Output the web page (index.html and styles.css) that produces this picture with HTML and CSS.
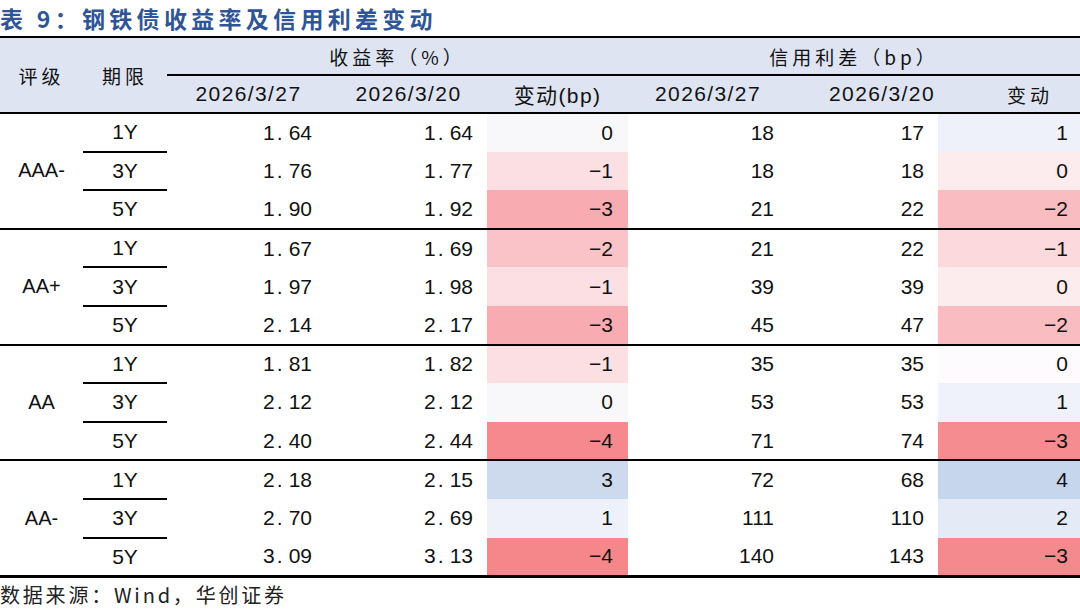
FILE: index.html
```html
<!DOCTYPE html>
<html lang="zh">
<head>
<meta charset="utf-8">
<title>钢铁债收益率及信用利差变动</title>
<link rel="stylesheet" href="styles.css">
</head>
<body>
<div class="title">表 9：钢铁债收益率及信用利差变动</div>
<table class="tbl">
  <colgroup>
    <col class="c1"><col class="c2"><col class="c3"><col class="c4"><col class="c5"><col class="c6"><col class="c7"><col class="c8">
  </colgroup>
  <thead>
    <tr class="h1">
      <th rowspan="2" class="cn hb">评级</th>
      <th rowspan="2" class="cn hb">期限</th>
      <th colspan="3" class="cn hl">收益率（%）</th>
      <th colspan="3" class="cn hl">信用利差（bp）</th>
    </tr>
    <tr class="h2">
      <th class="dt hb">2026/3/27</th>
      <th class="dt hb">2026/3/20</th>
      <th class="dt hb">变动(bp)</th>
      <th class="dt hb">2026/3/27</th>
      <th class="dt hb hs">2026/3/20</th>
      <th class="cn hb hv">变动</th>
    </tr>
  </thead>
  <tbody>
    <tr class="g">
      <td rowspan="3" class="lab">AAA-</td>
      <td class="term sub">1Y</td>
      <td class="num y1">1<span class="dp">.</span>64</td>
      <td class="num">1<span class="dp">.</span>64</td>
      <td class="num chg" style="background:#f8f8fb">0</td>
      <td class="num">18</td>
      <td class="num">17</td>
      <td class="num chg2" style="background:#eef1fa">1</td>
    </tr>
    <tr>
      <td class="term sub">3Y</td>
      <td class="num y1">1<span class="dp">.</span>76</td>
      <td class="num">1<span class="dp">.</span>77</td>
      <td class="num chg" style="background:#fbdfe3">−1</td>
      <td class="num">18</td>
      <td class="num">18</td>
      <td class="num chg2" style="background:#fdecee">0</td>
    </tr>
    <tr>
      <td class="term">5Y</td>
      <td class="num y1">1<span class="dp">.</span>90</td>
      <td class="num">1<span class="dp">.</span>92</td>
      <td class="num chg" style="background:#f8abb0">−3</td>
      <td class="num">21</td>
      <td class="num">22</td>
      <td class="num chg2" style="background:#f9bdc1">−2</td>
    </tr>

    <tr class="g">
      <td rowspan="3" class="lab">AA+</td>
      <td class="term sub">1Y</td>
      <td class="num y1">1<span class="dp">.</span>67</td>
      <td class="num">1<span class="dp">.</span>69</td>
      <td class="num chg" style="background:#f9c3c7">−2</td>
      <td class="num">21</td>
      <td class="num">22</td>
      <td class="num chg2" style="background:#fbd9dd">−1</td>
    </tr>
    <tr>
      <td class="term sub">3Y</td>
      <td class="num y1">1<span class="dp">.</span>97</td>
      <td class="num">1<span class="dp">.</span>98</td>
      <td class="num chg" style="background:#fbdfe3">−1</td>
      <td class="num">39</td>
      <td class="num">39</td>
      <td class="num chg2" style="background:#fdecee">0</td>
    </tr>
    <tr>
      <td class="term">5Y</td>
      <td class="num y1">2<span class="dp">.</span>14</td>
      <td class="num">2<span class="dp">.</span>17</td>
      <td class="num chg" style="background:#f8abb0">−3</td>
      <td class="num">45</td>
      <td class="num">47</td>
      <td class="num chg2" style="background:#f9bdc1">−2</td>
    </tr>

    <tr class="g">
      <td rowspan="3" class="lab">AA</td>
      <td class="term sub">1Y</td>
      <td class="num y1">1<span class="dp">.</span>81</td>
      <td class="num">1<span class="dp">.</span>82</td>
      <td class="num chg" style="background:#fbdfe3">−1</td>
      <td class="num">35</td>
      <td class="num">35</td>
      <td class="num chg2" style="background:#fdfbfd">0</td>
    </tr>
    <tr>
      <td class="term sub">3Y</td>
      <td class="num y1">2<span class="dp">.</span>12</td>
      <td class="num">2<span class="dp">.</span>12</td>
      <td class="num chg" style="background:#f8f8fb">0</td>
      <td class="num">53</td>
      <td class="num">53</td>
      <td class="num chg2" style="background:#f0f2fb">1</td>
    </tr>
    <tr>
      <td class="term">5Y</td>
      <td class="num y1">2<span class="dp">.</span>40</td>
      <td class="num">2<span class="dp">.</span>44</td>
      <td class="num chg" style="background:#f5898d">−4</td>
      <td class="num">71</td>
      <td class="num">74</td>
      <td class="num chg2" style="background:#f58c90">−3</td>
    </tr>

    <tr class="g">
      <td rowspan="3" class="lab">AA-</td>
      <td class="term sub">1Y</td>
      <td class="num y1">2<span class="dp">.</span>18</td>
      <td class="num">2<span class="dp">.</span>15</td>
      <td class="num chg" style="background:#cddaee">3</td>
      <td class="num">72</td>
      <td class="num">68</td>
      <td class="num chg2" style="background:#c6d6ec">4</td>
    </tr>
    <tr>
      <td class="term sub">3Y</td>
      <td class="num y1">2<span class="dp">.</span>70</td>
      <td class="num">2<span class="dp">.</span>69</td>
      <td class="num chg" style="background:#eef1fa">1</td>
      <td class="num">111</td>
      <td class="num">110</td>
      <td class="num chg2" style="background:#e4eaf6">2</td>
    </tr>
    <tr>
      <td class="term">5Y</td>
      <td class="num y1">3<span class="dp">.</span>09</td>
      <td class="num">3<span class="dp">.</span>13</td>
      <td class="num chg" style="background:#f5878b">−4</td>
      <td class="num">140</td>
      <td class="num">143</td>
      <td class="num chg2" style="background:#f58a8e">−3</td>
    </tr>
  </tbody>
</table>
<div class="source">数据来源：Wind，华创证券</div>
</body>
</html>
```

FILE: styles.css
```css
html, body {
  margin: 0;
  padding: 0;
  background: #ffffff;
}
body {
  width: 1080px;
  height: 609px;
  overflow: hidden;
  color: #111;
  font-family: "Liberation Sans", "Noto Sans CJK SC", sans-serif;
}
.title {
  height: 36px;
  line-height: 36px;
  font-family: "Noto Sans CJK SC", sans-serif;
  font-weight: bold;
  font-size: 23px;
  letter-spacing: 4.3px;
  color: #2f5597;
  white-space: nowrap;
}
.tbl {
  width: 1080px;
  border-collapse: collapse;
  table-layout: fixed;
  border-top: 2px solid #000;
  border-bottom: 3px solid #000;
}
.c1 { width: 83px; }
.c2 { width: 84px; }
.c3 { width: 163px; }
.c4 { width: 157px; }
.c5 { width: 141px; }
.c6 { width: 160px; }
.c7 { width: 150px; }
.c8 { width: 142px; }

thead th {
  background: #dee4f1;
  font-weight: normal;
  padding: 0;
  text-align: center;
  white-space: nowrap;
}
.h1 th { height: 36px; }
.h2 th { height: 36px; }
.cn {
  font-family: "Noto Sans CJK SC", sans-serif;
  font-size: 19px;
  letter-spacing: 4px;
}
.dt {
  font-family: "Liberation Sans", "Noto Sans CJK SC", sans-serif;
  font-size: 21px;
  letter-spacing: 1.4px;
}
.hs { padding-left: 38px !important; }
.hv { padding-left: 42px !important; }
.hl { border-bottom: 2px solid #000; }
.hb { border-bottom: 2px solid #000; }

tbody td {
  height: 36.6px;
  padding: 0;
  font-size: 21px;
  white-space: nowrap;
}
tbody tr.g td { border-top: 2px solid #000; }
.lab {
  text-align: center;
  font-size: 20px;
}
.term {
  text-align: center;
}
.sub { border-bottom: 2px solid #000; }
.num {
  text-align: right;
  padding-right: 14px !important;
}
.y1 { padding-right: 18px !important; }
.chg { padding-right: 15px !important; }
.chg2 { padding-right: 12px !important; }
.dp {
  display: inline-block;
  width: 14px;
  text-align: left;
  padding-left: 2px;
  box-sizing: border-box;
}
.source {
  margin-top: 5px;
  font-family: "Noto Sans CJK SC", sans-serif;
  font-size: 20px;
  letter-spacing: 2.8px;
  color: #222;
  white-space: nowrap;
  line-height: 24px;
}
```
